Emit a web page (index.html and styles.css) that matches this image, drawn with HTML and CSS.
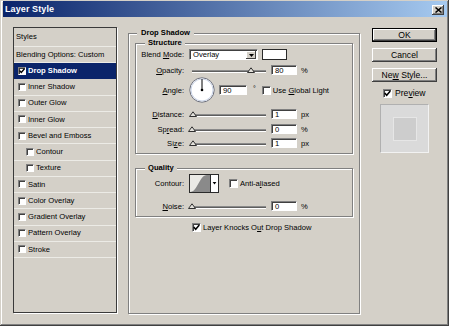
FILE: index.html
```html
<!DOCTYPE html>
<html>
<head>
<meta charset="utf-8">
<link rel="stylesheet" href="styles.css">
</head>
<body>
<div class="window">
  <div class="titlebar">
    <span class="title">Layer Style</span>
    <span class="close"><svg width="7" height="6" viewBox="0 0 7 6"><path d="M0.5 0.5 L6.5 5.5 M6.5 0.5 L0.5 5.5" stroke="#000" stroke-width="1.5"/></svg></span>
  </div>
  <div class="content">
    <div class="list">
      <div class="item head">Styles</div>
      <div class="item blend">Blending Options: Custom</div>
      <div class="item sel"><span class="cb"><svg width="6" height="6" viewBox="0 0 6 6"><path d="M0.6 2.6 L2.3 4.5 L5.5 0.8" fill="none" stroke="#000" stroke-width="1.4"/></svg></span>Drop Shadow</div>
      <div class="item"><span class="cb"></span>Inner Shadow</div>
      <div class="item"><span class="cb"></span>Outer Glow</div>
      <div class="item"><span class="cb"></span>Inner Glow</div>
      <div class="item"><span class="cb"></span>Bevel and Emboss</div>
      <div class="item sub"><span class="cb"></span>Contour</div>
      <div class="item sub"><span class="cb"></span>Texture</div>
      <div class="item"><span class="cb"></span>Satin</div>
      <div class="item"><span class="cb"></span>Color Overlay</div>
      <div class="item"><span class="cb"></span>Gradient Overlay</div>
      <div class="item"><span class="cb"></span>Pattern Overlay</div>
      <div class="item"><span class="cb"></span>Stroke</div>
    </div>

    <fieldset class="group outer">
      <legend class="lg-outer">Drop Shadow</legend>
      <fieldset class="group structure">
        <legend class="lg-inner">Structure</legend>
        <div class="row r-blend">
          <span class="label">Blend <u>M</u>ode:</span>
          <div class="select"><span class="sel-text">Overlay</span><span class="sel-btn"><svg width="5" height="3" viewBox="0 0 5 3"><path d="M0 0 H5 L2.5 3 Z" fill="#000"/></svg></span></div>
          <span class="swatch-color"></span>
        </div>
        <div class="row r-opacity">
          <span class="label"><u>O</u>pacity:</span>
          <div class="slider"><span class="track"></span><svg class="thumb" style="left:58px" width="8" height="6" viewBox="0 0 8 6"><path d="M0.5 5.5 L4 0.8 L7.5 5.5 Z" fill="#e4e2dc" stroke="#303030" stroke-width="1"/></svg></div>
          <span class="field">80</span><span class="unit">%</span>
        </div>
        <div class="row r-angle">
          <span class="label"><u>A</u>ngle:</span>
          <svg class="dial" width="26" height="26" viewBox="0 0 26 26"><circle cx="13" cy="13" r="12.2" fill="#fff" stroke="#6b6e7a" stroke-width="1"/><circle cx="13" cy="13" r="11" fill="none" stroke="#c9d3e6" stroke-width="1"/><path d="M13 13 V2" stroke="#000" stroke-width="1"/><circle cx="13" cy="13" r="1.3" fill="#000"/></svg>
          <span class="field wide">90</span><span class="deg">°</span>
          <span class="cb big"></span><span class="cb-text">Use <u>G</u>lobal Light</span>
        </div>
        <div class="row r-dist">
          <span class="label"><u>D</u>istance:</span>
          <div class="slider"><span class="track"></span><svg class="thumb" style="left:0px" width="8" height="6" viewBox="0 0 8 6"><path d="M0.5 5.5 L4 0.8 L7.5 5.5 Z" fill="#e4e2dc" stroke="#303030" stroke-width="1"/></svg></div>
          <span class="field">1</span><span class="unit">px</span>
        </div>
        <div class="row r-spread">
          <span class="label">Sp<u>r</u>ead:</span>
          <div class="slider"><span class="track"></span><svg class="thumb" style="left:-1px" width="8" height="6" viewBox="0 0 8 6"><path d="M0.5 5.5 L4 0.8 L7.5 5.5 Z" fill="#e4e2dc" stroke="#303030" stroke-width="1"/></svg></div>
          <span class="field">0</span><span class="unit">%</span>
        </div>
        <div class="row r-size">
          <span class="label">Si<u>z</u>e:</span>
          <div class="slider"><span class="track"></span><svg class="thumb" style="left:0px" width="8" height="6" viewBox="0 0 8 6"><path d="M0.5 5.5 L4 0.8 L7.5 5.5 Z" fill="#e4e2dc" stroke="#303030" stroke-width="1"/></svg></div>
          <span class="field">1</span><span class="unit">px</span>
        </div>
      </fieldset>

      <fieldset class="group quality">
        <legend class="lg-inner">Quality</legend>
        <div class="row r-contour">
          <span class="label">Contour:</span>
          <svg class="contour" width="30" height="19" viewBox="0 0 30 19">
            <rect x="0.5" y="0.5" width="29" height="18" fill="#ebeae6" stroke="#2a2a2a"/>
            <path d="M1 18 C 9 18, 10 1, 18 1 L21 1 L21 18 Z" fill="#8a8a8a"/>
            <rect x="21.5" y="1" width="7.5" height="17" fill="#fff"/>
            <path d="M21.5 1 V18" stroke="#2a2a2a" stroke-width="1"/>
            <path d="M23.6 8 H27.4 L25.5 10.4 Z" fill="#000"/>
          </svg>
          <span class="cb big aa"></span><span class="cb-text">Anti-a<u>l</u>iased</span>
        </div>
        <div class="row r-noise">
          <span class="label"><u>N</u>oise:</span>
          <div class="slider"><span class="track"></span><svg class="thumb" style="left:-1px" width="8" height="6" viewBox="0 0 8 6"><path d="M0.5 5.5 L4 0.8 L7.5 5.5 Z" fill="#e4e2dc" stroke="#303030" stroke-width="1"/></svg></div>
          <span class="field">0</span><span class="unit">%</span>
        </div>
      </fieldset>

      <div class="row r-knock">
        <span class="cb big"><svg width="7" height="7" viewBox="0 0 7 7"><path d="M0.7 3 L2.7 5.3 L6.3 1" fill="none" stroke="#000" stroke-width="1.5"/></svg></span><span class="cb-text">Layer Knocks O<u>u</u>t Drop Shadow</span>
      </div>
    </fieldset>

    <div class="side">
      <div class="btn default"><span>OK</span></div>
      <div class="btn"><span>Cancel</span></div>
      <div class="btn"><span>Ne<u>w</u> Style...</span></div>
      <div class="prev-check"><span class="cb big"><svg width="7" height="7" viewBox="0 0 7 7"><path d="M0.7 3 L2.7 5.3 L6.3 1" fill="none" stroke="#000" stroke-width="1.5"/></svg></span><span class="prev-text">Pre<u>v</u>iew</span></div>
      <div class="preview"><div class="preview-swatch"></div></div>
    </div>
  </div>
</div>
</body>
</html>
```

FILE: styles.css
```css
* { box-sizing: border-box; }
html, body { margin: 0; padding: 0; background: #fff; }
body {
  width: 450px; height: 331px; overflow: hidden;
  font-family: "Liberation Sans", Arial, sans-serif;
  font-size: 7.6px; color: #000;
}
u { text-decoration: underline; text-underline-offset: 1px; }

.window {
  width: 449px; height: 326px;
  background: #d4d0c8;
  padding: 1px 2px 2px 3px;
  box-shadow: inset -1px -1px #404040, inset 1px 1px #d4d0c8, inset -2px -2px #808080, inset 2px 2px #fff;
  display: flex; flex-direction: column;
}

.titlebar {
  height: 16px; flex: none;
  background: linear-gradient(to right, #0a246a, #a6caf0);
  display: flex; align-items: center; justify-content: space-between;
  padding: 0 3px 0 2px;
}
.title { color: #fff; font-weight: bold; font-size: 9px; letter-spacing: 0.1px; }
.close {
  width: 12px; height: 10px; margin-top: 1px;
  background: #d4d0c8;
  box-shadow: inset -1px -1px #404040, inset 1px 1px #fff, inset -2px -2px #808080;
  display: flex; align-items: center; justify-content: center;
}

.content { display: flex; align-items: flex-start; padding: 10px 0 0 10px; }

/* styles list */
.list {
  width: 104px; height: 286px; flex: none;
  border: 1px solid #3a3a3a;
  box-shadow: 1px 1px #fff;
}
.item {
  height: 16.25px;
  border-bottom: 1px solid #ecebe6;
  display: flex; align-items: center;
  padding-left: 4px; white-space: nowrap; line-height: 1;
}
.item.head { height: 19px; padding-left: 2px; }
.item.blend { height: 16px; padding-left: 2px; }
.item.sel { background: #0a246a; color: #fff; font-weight: bold; border-bottom-color: #0a246a; }
.item.sub { padding-left: 12px; }

.cb {
  width: 8px; height: 8px; flex: none; margin-right: 2px;
  background: #fff;
  border: 1px solid; border-color: #808080 #fff #fff #808080;
  box-shadow: inset 1px 1px #404040;
  display: flex; align-items: center; justify-content: center;
}
.cb.big { width: 9px; height: 9px; margin-right: 2px; }

/* group boxes */
fieldset.group {
  margin: 0; padding: 0; min-width: 0;
  border: 1px solid #808080;
  box-shadow: inset 1px 1px #fff, 1px 1px #fff;
}
legend {
  font-weight: bold; line-height: 10px; background: #d4d0c8;
}
.lg-outer { padding: 0 4px; margin-left: 2px; }
.lg-inner { padding: 0 3px; margin-left: 9px; }

.outer {
  width: 232px; height: 286px; flex: none;
  margin-left: 11px !important; margin-top: 1px !important;
  padding: 0 6px !important;
}
.structure { padding-bottom: 5px !important; }
.quality { margin-top: 9px !important; padding-bottom: 5px !important; }

.row { display: flex; align-items: center; height: 10px; white-space: nowrap; }
.label { width: 48px; flex: none; text-align: right; margin-right: 5px; }

.r-blend { margin-top: 1px; height: 11px; }
.r-opacity { margin-top: 5px; }
.r-angle { margin-top: 2px; height: 26px; }
.r-dist { margin-top: 6px; }
.r-spread { margin-top: 5px; }
.r-size { margin-top: 4px; }
.r-contour { margin-top: 1px; height: 19px; }
.r-noise { margin-top: 8px; }
.r-knock { margin-top: 5px; padding-left: 57px; }

.select {
  width: 69px; height: 11px; flex: none;
  background: #fff;
  border: 1px solid; border-color: #808080 #fff #fff #808080;
  box-shadow: inset 1px 1px #404040;
  display: flex; align-items: center; justify-content: space-between;
  padding: 1px 1px 0 3px;
}
.sel-text { line-height: 1; }
.sel-btn {
  width: 10px; height: 8px;
  background: #d4d0c8;
  box-shadow: inset -1px -1px #404040, inset 1px 1px #fff;
  display: flex; align-items: center; justify-content: center;
}
.swatch-color {
  width: 25px; height: 11px; margin-left: 4px; flex: none;
  background: #fff; border: 1px solid #2a2a2a;
}

.slider { position: relative; width: 77px; height: 10px; flex: none; }
.track {
  position: absolute; left: 3px; right: 0; top: 5px; height: 3px;
  background: #5e5e5e;
  border-top: 1px solid #8a8a8a; border-bottom: 1px solid #fff;
}
.thumb { position: absolute; top: 2px; }

.field {
  width: 26px; height: 10px; flex: none; margin-left: 5px;
  background: #fff;
  border: 1px solid; border-color: #808080 #fff #fff #808080;
  box-shadow: inset 1px 1px #404040;
  padding: 1px 0 0 3px; line-height: 7px;
}
.field.wide { width: 28px; margin-left: 4px; }
.unit { margin-left: 4px; }
.deg { align-self: flex-start; margin: 8px 0 0 6px; font-size: 7px; }
.r-angle .cb { margin-left: 6px; }
.cb-text { margin-left: 0; }

.contour { flex: none; }
.aa { margin-left: 10px; margin-right: 3px; }

/* right column */
.side {
  width: 65px; flex: none; margin-left: 12px; padding-top: 1px;
  display: flex; flex-direction: column;
  font-size: 8.6px;
}
.btn {
  height: 14px; margin-bottom: 6px;
  background: #d4d0c8;
  box-shadow: inset -1px -1px #404040, inset 1px 1px #fff, inset -2px -2px #808080;
  display: flex; align-items: center; justify-content: center;
  line-height: 1; white-space: nowrap;
}
.btn.default { border: 1px solid #000; }
.prev-check { height: 10px; margin-top: 0; display: flex; align-items: center; padding-left: 11px; }
.prev-check .cb { margin-right: 3px; }
.preview {
  width: 49px; height: 49px; margin: 6px 0 0 8px;
  background: #dadada;
  border: 1px solid; border-color: #b0b0b0 #f2f2f2 #f2f2f2 #b0b0b0;
  display: flex; align-items: center; justify-content: center;
}
.preview-swatch {
  width: 24px; height: 24px;
  background: #cdcdcd; border: 1px solid #e6e6e6;
}
```
